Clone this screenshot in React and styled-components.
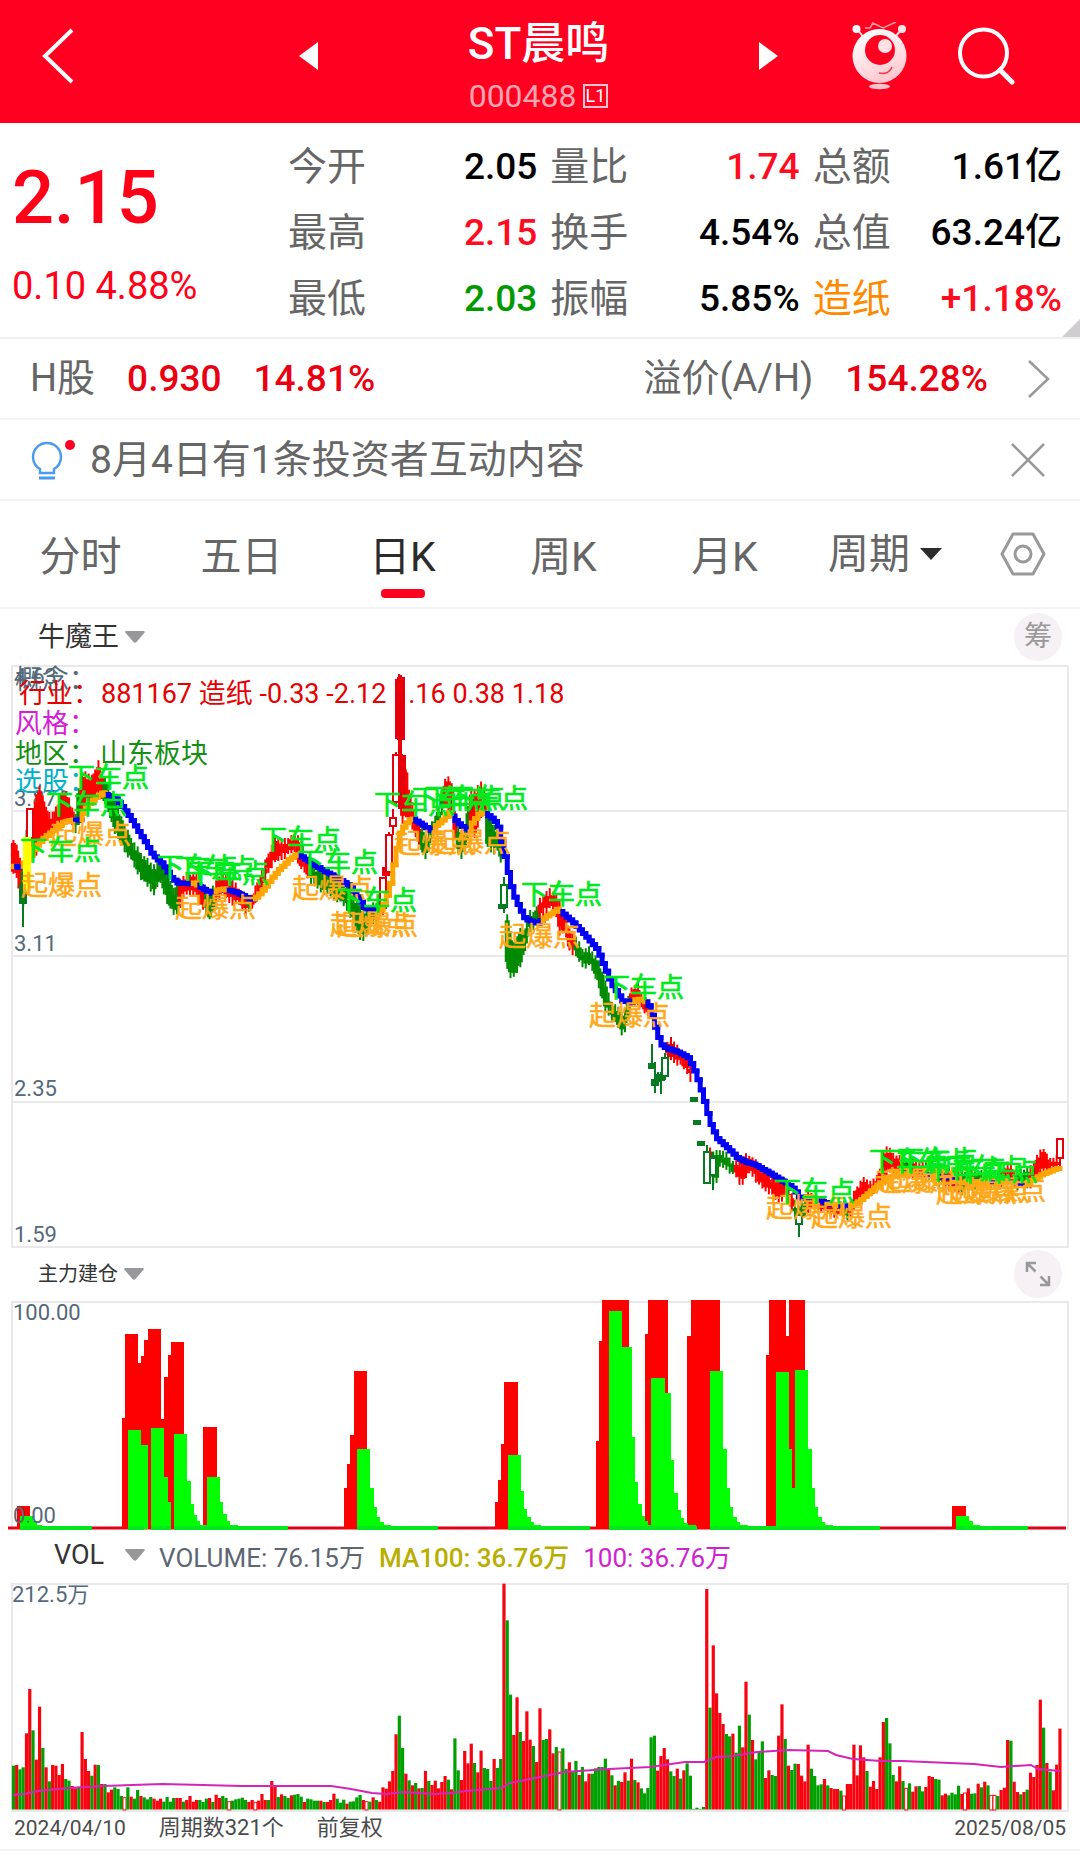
import React from "react";
import styled, { createGlobalStyle } from "styled-components";

const FONT = 'Roboto, "Noto Sans CJK SC", sans-serif';

const GlobalStyle = createGlobalStyle`
  * { box-sizing: border-box; }
  body { margin: 0; background: #fff; font-family: ${FONT}; color: #222; }
  button, select { font: inherit; color: inherit; background: none; border: 0; padding: 0; margin: 0; cursor: pointer; }
  svg { display: block; flex: none; }
  svg text { font-family: ${FONT}; }
`;

const Page = styled.main`
  width: 100%;
  background: #fff;
`;

/* ---------- header ---------- */

const Header = styled.header`
  display: grid;
  grid-template-columns: 318px 1fr 321px;
  align-items: center;
  height: 123px;
  background: #ff0020;
  color: #fff;
`;

const HeaderStart = styled.div`
  display: flex;
  align-items: center;
  justify-content: space-between;
  padding: 0 0 12px 42px;
`;

const HeaderEnd = styled.div`
  display: flex;
  align-items: center;
  padding: 0 65px 12px 0;
  gap: 51px;
`;

const IconButton = styled.button`
  display: flex;
  align-items: center;
  justify-content: center;
`;

const NextButton = styled(IconButton)`
  margin-right: auto;
`;

const TitleBlock = styled.div`
  display: flex;
  flex-direction: column;
  align-items: center;
  padding-top: 8px;
`;

const Title = styled.h1`
  margin: 0;
  font-size: 44px;
  line-height: 60px;
  font-weight: 500;
`;

const CodeLine = styled.div`
  display: flex;
  align-items: center;
  gap: 6px;
  font-size: 32px;
  line-height: 44px;
  color: #ffa6b0;
`;

const Level = styled.span`
  border: 2px solid #ffc4cb;
  color: #fff;
  font-size: 18px;
  line-height: 20px;
  padding: 0 1px;
`;

/* ---------- quote ---------- */

const Quote = styled.section`
  position: relative;
  display: grid;
  grid-template-columns: 276px 1fr;
  padding: 11px 18px 5px 12px;
  border-bottom: 2px solid #efeff0;
`;

const PriceBlock = styled.div`
  display: flex;
  flex-direction: column;
  color: #ff0018;
`;

const Price = styled.strong`
  font-size: 74px;
  line-height: 128px;
  font-weight: 500;
`;

const Change = styled.span`
  font-size: 38px;
  line-height: 48px;
`;

const Stats = styled.dl`
  display: grid;
  grid-template-columns: repeat(3, 1fr);
  column-gap: 13px;
  margin: 0;
`;

const Stat = styled.div`
  display: flex;
  justify-content: space-between;
  line-height: 66px;

  dt { font-size: 39px; color: ${(p) => p.$label || "#666"}; }
  dd { margin: 0; font-size: 37px; font-weight: 500; color: ${(p) => p.$value || "#000"}; }
`;

const Fold = styled.svg`
  position: absolute;
  right: 0;
  bottom: 0;
`;

/* ---------- strips ---------- */

const Strip = styled.section`
  display: flex;
  align-items: center;
  height: 81px;
  padding: 0 30px;
  border-bottom: 2px solid #f3f3f4;
  font-size: 38px;
  line-height: 60px;
  color: #666;
`;

const Pair = styled.div`
  display: flex;
  align-items: baseline;
  gap: 32px;
  margin-left: ${(p) => (p.$end ? "auto" : "0")};
  margin-right: ${(p) => (p.$end ? "40px" : "0")};
`;

const Rise = styled.span`
  color: #ea0010;
  font-size: 37px;
  font-weight: 500;
`;

const NoticeText = styled.a`
  flex: 1;
  margin-left: 14px;
  font-size: 39px;
  color: #666;
  text-decoration: none;
`;

const CloseButton = styled(IconButton)`
  margin-right: 4px;
`;

/* ---------- period tabs ---------- */

const Tabs = styled.nav`
  display: grid;
  grid-template-columns: repeat(5, 161fr) 160fr 115fr;
  height: 108px;
  border-bottom: 2px solid #f3f3f4;
`;

const Tab = styled.button`
  display: flex;
  flex-direction: column;
  align-items: center;
  justify-content: flex-end;
  padding-bottom: 9px;
  font-size: 41px;
  line-height: 64px;
  color: ${(p) => (p.$active ? "#2b2b2b" : "#666")};

  &::after {
    content: "";
    width: 44px;
    height: 9px;
    border-radius: 4px;
    background: ${(p) => (p.$active ? "#ff0020" : "transparent")};
  }
`;

const TabCell = styled.div`
  display: flex;
  align-items: center;
  justify-content: center;
`;

const Picker = styled.label`
  display: flex;
  align-items: center;
  gap: ${(p) => p.$gap || 6}px;
  color: ${(p) => p.$color || "#333"};
  font-size: ${(p) => p.$size}px;

  select { appearance: none; outline: none; }
`;

/* ---------- chart panes ---------- */

const PaneBar = styled.div`
  display: flex;
  align-items: center;
  justify-content: space-between;
  height: ${(p) => p.$height}px;
  padding: 0 18px 0 38px;
`;

const RoundButton = styled.button`
  display: flex;
  align-items: center;
  justify-content: center;
  width: 48px;
  height: 48px;
  border-radius: 50%;
  background: #f5f1f4;
  color: #999;
  font-size: 28px;
  line-height: 40px;
`;

const VolumeBar = styled.div`
  display: flex;
  align-items: center;
  gap: 14px;
  height: 50px;
  padding: 0 0 4px 54px;
  font-size: 26px;
`;

const Reading = styled.span`
  color: ${(p) => p.$color};
  font-weight: ${(p) => p.$weight || 400};
`;

const ChartSvg = styled.svg`
  width: 100%;
  height: auto;
`;

const Footer = styled.footer`
  display: flex;
  align-items: center;
  gap: 33px;
  height: 38px;
  padding: 0 14px 6px;
  border-bottom: 2px solid #f3f3f4;
  font-size: 22px;
  line-height: 30px;
  color: #4b4b4b;

  time { font-size: 21px; }
  time:last-child { margin-left: auto; }
`;

const Caret = ({ width = 20, color = "#98989a" }) => (
  <svg width={width} height={width * 0.6} viewBox="0 0 20 12" aria-hidden="true">
    <path d="M1 0H19Q20.500 .8 19.300 2L11.500 11Q10 12.500 8.500 11L.7 2Q-.5 .8 1 0Z" fill={color} />
  </svg>
);

/* ---------- chart data ---------- */

const START = 13.4;
const PITCH = 3.2705;
const barX = (i) => START + i * PITCH;
const RED = "#ff0000";
const GREEN = "#008a00";

// [x, high, low, colour]
const RANGE = [
  [12, 840, 870, "r"], [15, 840, 878, "r"], [18, 850, 876, "r"], [20, 860, 895, "g"], [23, 870, 906, "g"],
  [27, 825, 870, "r"], [34, 812, 855, "r"], [37, 790, 852, "r"], [40, 787, 846, "r"], [43, 796, 840, "r"],
  [48, 815, 834, "r"], [55, 810, 830, "r"], [62, 791, 825, "r"], [66, 792, 824, "r"], [70, 802, 822, "r"],
  [74, 812, 824, "g"], [77, 818, 836, "g"], [80, 772, 818, "r"], [85, 772, 812, "r"], [90, 777, 806, "r"],
  [95, 771, 800, "r"], [98, 761, 795, "r"], [102, 772, 796, "r"], [104, 776, 802, "g"], [110, 790, 815, "g"],
  [116, 802, 835, "g"], [125, 826, 851, "g"], [130, 836, 857, "g"], [136, 846, 870, "g"], [143, 856, 880, "g"],
  [150, 862, 889, "g"], [155, 866, 893, "g"], [160, 862, 880, "g"], [165, 865, 896, "g"], [170, 880, 908, "g"],
  [175, 892, 916, "g"], [178, 880, 910, "r"], [185, 876, 894, "r"], [195, 873, 892, "r"], [200, 880, 904, "r"],
  [205, 888, 910, "g"], [210, 890, 920, "g"], [215, 884, 905, "r"], [222, 872, 892, "r"], [230, 877, 902, "r"],
  [240, 890, 904, "r"], [247, 896, 914, "g"], [252, 896, 908, "r"], [260, 876, 892, "r"], [265, 862, 880, "r"],
  [270, 850, 867, "r"], [275, 838, 862, "r"], [285, 840, 856, "r"], [295, 834, 850, "r"], [300, 836, 868, "r"],
  [305, 860, 872, "r"], [310, 861, 880, "g"], [320, 870, 890, "g"], [330, 872, 895, "g"], [340, 880, 901, "g"],
  [348, 886, 910, "g"], [355, 900, 925, "g"], [360, 906, 938, "g"], [366, 910, 938, "g"], [372, 905, 922, "g"],
  [378, 902, 922, "r"],
  [404, 755, 815, "r"], [408, 786, 820, "r"], [415, 815, 832, "r"], [420, 825, 848, "g"], [426, 836, 858, "g"],
  [430, 828, 845, "g"], [436, 814, 828, "g"], [440, 806, 822, "g"], [443, 782, 806, "r"], [447, 776, 810, "r"],
  [451, 780, 812, "r"], [455, 812, 836, "g"], [460, 836, 862, "g"], [465, 830, 848, "g"], [470, 792, 828, "r"],
  [475, 790, 838, "r"], [480, 783, 816, "r"], [484, 785, 812, "r"], [487, 812, 845, "g"], [492, 822, 852, "g"],
  [500, 832, 850, "g"],
  [507, 914, 965, "g"], [511, 936, 980, "g"], [515, 945, 974, "g"], [519, 930, 968, "g"], [524, 930, 954, "g"],
  [530, 912, 930, "g"], [535, 912, 926, "g"], [539, 901, 918, "r"], [545, 893, 912, "r"], [550, 890, 908, "r"],
  [555, 893, 908, "r"], [560, 902, 935, "r"], [565, 915, 932, "r"], [569, 930, 948, "r"], [575, 936, 955, "g"],
  [583, 950, 966, "g"], [590, 948, 965, "g"], [598, 960, 982, "g"], [605, 980, 1010, "g"], [610, 1000, 1015, "g"],
  [618, 1008, 1026, "g"], [622, 1014, 1034, "g"], [627, 1005, 1026, "g"], [630, 988, 1006, "r"], [638, 985, 1002, "r"],
  [645, 1000, 1013, "r"], [649, 1004, 1014, "r"],
  [668, 1045, 1056, "r"], [672, 1040, 1060, "r"], [680, 1050, 1064, "r"], [688, 1056, 1073, "r"], [692, 1066, 1083, "r"],
  [711, 1152, 1176, "g"], [715, 1153, 1186, "g"], [720, 1150, 1166, "g"], [727, 1154, 1168, "g"], [733, 1162, 1174, "g"],
  [736, 1160, 1176, "r"], [740, 1160, 1184, "r"], [745, 1155, 1180, "r"], [750, 1156, 1171, "r"], [760, 1165, 1186, "r"],
  [770, 1176, 1192, "r"], [778, 1175, 1202, "r"], [785, 1180, 1196, "r"], [790, 1190, 1206, "r"], [795, 1202, 1216, "g"],
  [799, 1206, 1226, "g"], [803, 1200, 1217, "g"], [808, 1190, 1210, "r"], [815, 1198, 1207, "r"], [825, 1200, 1211, "r"],
  [835, 1205, 1215, "r"], [842, 1202, 1214, "g"], [850, 1203, 1219, "r"], [855, 1190, 1206, "r"], [860, 1182, 1200, "r"],
  [865, 1178, 1196, "r"], [872, 1183, 1192, "r"], [880, 1170, 1186, "r"], [885, 1146, 1175, "r"], [889, 1147, 1172, "r"],
  [893, 1155, 1174, "r"], [900, 1156, 1175, "g"], [910, 1160, 1176, "r"], [925, 1162, 1178, "g"], [940, 1166, 1184, "r"],
  [960, 1172, 1194, "g"], [980, 1172, 1186, "g"], [1000, 1174, 1188, "r"], [1008, 1162, 1176, "r"], [1015, 1172, 1188, "g"],
  [1030, 1168, 1186, "r"], [1037, 1156, 1178, "r"], [1043, 1148, 1170, "r"], [1050, 1160, 1173, "r"], [1056, 1156, 1166, "r"],
];

// stretches of the time axis that are drawn one candle at a time below
const SINGLES_AT = [[380, 402], [501, 506], [650, 667], [693, 709], [1058, 1070]];

// [x, high, body top, body bottom, low, colour, hollow]
const SINGLES = [
  [23, 872, 885, 903, 927, "g", 0], [30, 808, 809, 838, 845, "r", 1],
  [383, 877, 878, 908, 915, "r", 1], [386, 864, 868, 875, 882, "r", 0], [389, 832, 835, 872, 876, "r", 1],
  [393, 809, 818, 826, 835, "r", 1], [396, 752, 755, 802, 804, "r", 1], [399, 674, 680, 738, 755, "r", 0],
  [401, 675, 678, 739, 755, "r", 0], [402, 754, 756, 808, 812, "r", 0],
  [504, 877, 885, 907, 913, "g", 1], [502, 904, 905, 908, 908, "g", 0],
  [652, 1044, 1064, 1068, 1068, "g", 0], [655, 1062, 1080, 1085, 1093, "g", 0], [658, 1072, 1075, 1081, 1084, "g", 0],
  [661, 1072, 1075, 1080, 1094, "g", 0], [665, 1053, 1058, 1076, 1080, "g", 1],
  [694, 1098, 1098, 1101, 1101, "g", 0], [697, 1121, 1121, 1124, 1124, "g", 0], [701, 1142, 1142, 1145, 1145, "g", 0],
  [707, 1145, 1152, 1183, 1183, "g", 1], [713, 1152, 1158, 1175, 1190, "g", 1],
  [671, 1037, 1045, 1056, 1060, "r", 0], [799, 1206, 1215, 1224, 1237, "g", 1],
  [1060, 1138, 1139, 1158, 1166, "r", 1],
];

// [x, y, colour] of the trend line
const TREND = [
  [12, 867, "o"], [16, 866, "b"], [22, 868, "o"], [32, 857, "o"], [37, 848, "o"], [43, 841, "o"], [50, 835, "o"],
  [58, 829, "o"], [66, 822, "o"], [74, 820, "b"], [82, 820, "o"], [86, 812, "o"], [92, 803, "o"], [100, 796, "o"],
  [105, 793, "b"], [112, 796, "b"], [118, 799, "b"], [125, 807, "b"], [133, 818, "b"], [140, 830, "b"], [147, 841, "b"],
  [155, 855, "b"], [163, 862, "b"], [168, 868, "b"], [173, 877, "b"], [180, 883, "b"], [192, 884, "o"], [197, 883, "b"],
  [207, 890, "b"], [213, 893, "o"], [219, 890, "o"], [226, 889, "b"], [240, 893, "b"], [254, 900, "o"], [260, 896, "o"],
  [267, 888, "o"], [275, 877, "o"], [283, 868, "o"], [292, 859, "o"], [300, 854, "b"], [315, 864, "b"], [330, 873, "b"],
  [343, 880, "b"], [352, 886, "b"], [360, 897, "b"], [367, 908, "b"], [377, 911, "o"], [382, 911, "o"], [387, 903, "o"],
  [392, 888, "o"], [395, 870, "o"], [399, 850, "o"], [402, 834, "o"], [407, 825, "o"], [414, 818, "b"], [425, 825, "b"],
  [433, 831, "o"], [438, 826, "o"], [445, 820, "o"], [452, 812, "b"], [460, 823, "b"], [471, 831, "o"], [475, 822, "o"],
  [482, 813, "o"], [486, 812, "b"], [494, 818, "b"], [500, 824, "b"], [504, 842, "b"], [508, 860, "b"], [512, 880, "b"],
  [516, 895, "b"], [522, 908, "b"], [527, 918, "b"], [532, 921, "b"], [540, 923, "o"], [548, 917, "o"], [560, 909, "b"],
  [575, 922, "b"], [588, 936, "b"], [600, 950, "b"], [606, 965, "b"], [614, 984, "b"], [625, 1001, "b"], [632, 1002, "o"],
  [640, 999, "o"], [645, 1000, "b"], [650, 1003, "b"], [653, 1010, "b"], [657, 1025, "b"], [663, 1044, "b"],
  [668, 1048, "b"], [680, 1052, "b"], [690, 1057, "b"], [695, 1066, "b"], [700, 1079, "b"], [705, 1095, "b"],
  [709, 1110, "b"], [714, 1127, "b"], [720, 1139, "b"], [730, 1148, "b"], [740, 1158, "b"], [748, 1162, "b"],
  [758, 1165, "b"], [770, 1172, "b"], [780, 1178, "b"], [790, 1184, "b"], [797, 1190, "b"], [802, 1198, "b"],
  [812, 1199, "o"], [818, 1200, "b"], [832, 1204, "o"], [838, 1205, "b"], [850, 1207, "o"], [862, 1201, "o"],
  [870, 1194, "o"], [880, 1185, "o"], [890, 1178, "o"], [900, 1174, "o"], [915, 1174, "b"], [930, 1175, "o"],
  [940, 1176, "b"], [952, 1178, "b"], [960, 1183, "o"], [985, 1182, "b"], [995, 1183, "o"], [1010, 1182, "b"],
  [1026, 1184, "o"], [1035, 1180, "o"], [1045, 1174, "o"], [1055, 1170, "o"], [1062, 1168, "o"],
];

const EXIT_MARKS = [
  [68, 777], [46, 804], [20, 850], [157, 867], [188, 873], [175, 868], [260, 839], [297, 862], [336, 900], [374, 804],
  [412, 799], [424, 798], [447, 798], [521, 894], [603, 987], [774, 1191], [869, 1161], [889, 1161], [897, 1160],
  [925, 1169], [944, 1168], [957, 1171],
];
const ENTRY_MARKS = [
  [51, 834], [22, 885], [176, 907], [293, 888], [331, 924], [338, 925], [395, 843], [431, 842], [500, 936], [590, 1015],
  [767, 1207], [812, 1216], [876, 1181], [886, 1180], [937, 1192], [950, 1191], [966, 1190],
];

const at = (rows, x) => {
  let k = 0;
  while (k < rows.length - 2 && rows[k + 1][0] <= x) k += 1;
  return [rows[k], rows[k + 1]];
};
const mix = (a, b, x, n) => a[n] + ((b[n] - a[n]) * Math.min(1, Math.max(0, (x - a[0]) / (b[0] - a[0]))));

const CANDLES = Array.from({ length: 321 }, (_, i) => {
  const x = barX(i);
  if (SINGLES_AT.some(([a, b]) => x > a && x < b)) return null;
  const [a, b] = at(RANGE, x);
  const high = mix(a, b, x, 1);
  const low = mix(a, b, x, 2);
  const inset = 3 + ((i * 7) % 5);
  return { x, high: high - (i % 3), low: low + ((i * 5) % 4), top: high + inset, bottom: low - inset + 1, color: a[3] === "r" ? RED : GREEN };
}).filter(Boolean);

const TREND_STEPS = Array.from({ length: 320 }, (_, i) => {
  const x = barX(i);
  const [a, b] = at(TREND, x);
  const [c, d] = at(TREND, barX(i + 1));
  return { x, from: mix(a, b, x, 1), to: mix(c, d, barX(i + 1), 1), color: a[2] === "b" ? "#0000f5" : "#ffa500" };
});

// [x1, x2, top]
const BUILD_RED = [
  [17, 30, 1506], [122, 126, 1418], [125, 138, 1334], [138, 142, 1363], [141, 145, 1356], [144, 149, 1340],
  [148, 161, 1329], [161, 164, 1419], [164, 168, 1377], [168, 171, 1355], [171, 184, 1342], [203, 217, 1427],
  [344, 347, 1488], [347, 350, 1464], [350, 354, 1435], [354, 367, 1371], [495, 498, 1502], [498, 501, 1480],
  [501, 504, 1444], [504, 518, 1382], [596, 599, 1441], [599, 602, 1341], [602, 629, 1300], [645, 649, 1334],
  [648, 668, 1300], [687, 691, 1336], [691, 720, 1300], [766, 770, 1355], [769, 786, 1300], [786, 789, 1336],
  [789, 805, 1300], [952, 966, 1506],
];
const BUILD_GREEN = [
  [20, 33, 1516], [33, 37, 1521], [37, 42, 1525], [128, 141, 1430], [141, 148, 1445], [151, 164, 1428], [164, 168, 1477],
  [168, 171, 1502], [174, 187, 1434], [187, 191, 1481], [191, 194, 1504], [194, 197, 1515], [197, 200, 1521],
  [200, 207, 1525], [207, 220, 1477], [220, 223, 1502], [223, 227, 1514], [227, 230, 1521], [230, 238, 1525],
  [357, 370, 1449], [370, 374, 1488], [374, 377, 1507], [377, 380, 1517], [380, 384, 1522], [384, 391, 1525],
  [508, 521, 1455], [521, 524, 1491], [524, 527, 1509], [527, 531, 1517], [531, 534, 1522], [534, 541, 1525],
  [609, 622, 1311], [622, 632, 1347], [632, 635, 1437], [635, 638, 1482], [638, 642, 1504], [642, 645, 1516],
  [645, 648, 1521], [648, 652, 1525], [651, 665, 1378], [665, 671, 1393], [671, 674, 1460], [674, 678, 1493],
  [678, 681, 1510], [681, 684, 1518], [684, 688, 1523], [688, 696, 1525], [710, 723, 1371], [723, 727, 1449],
  [727, 730, 1488], [730, 733, 1507], [733, 737, 1517], [737, 740, 1522], [740, 748, 1525], [776, 789, 1372],
  [789, 792, 1449], [792, 795, 1488], [795, 808, 1370], [808, 812, 1449], [812, 815, 1488], [815, 818, 1507],
  [818, 822, 1517], [822, 825, 1522], [825, 833, 1525], [956, 969, 1516], [969, 973, 1521], [973, 980, 1525],
];
const BUILD_BASE = [
  [20, 92], [128, 144], [151, 171], [174, 288], [357, 438], [508, 590], [609, 697], [710, 880], [956, 1028],
];

const VOLUMES = (
  "g587 r585 g598 g592 r490 r357 g481 r569 r410 g534 r592 g634 r585 r587 r615 r582 g627 g632 r648 r655 " +
  "g650 r486 r567 r603 g617 r584 g585 r642 g642 r667 r659 g652 g657 g678 h680 g652 r680 g686 g660 r678 " +
  "g682 g688 g681 r686 r692 r686 g695 g681 g695 g684 r684 r684 g695 r690 r678 r695 r690 g690 g696 g686 " +
  "r684 g696 r674 r684 g678 g684 h692 g692 g688 g686 g683 g690 r696 r690 h694 r692 r672 r690 g690 r633 " +
  "r650 g681 r673 g678 g684 r676 g674 g672 g680 r696 g686 g688 g692 g692 r692 g696 r696 r690 r671 g686 " +
  "g698 g689 r701 g695 g694 g682 g675 r690 h692 g695 r682 g690 r695 r652 r656 r634 r603 r493 g437 g534 " +
  "r611 g631 r646 g639 r655 g654 r603 g633 r645 r632 r655 r636 r618 g629 r658 g505 g601 r630 r543 r580 " +
  "r521 g579 r607 r542 g594 g597 g633 r567 g594 g567 r41 g151 g374 r495 r382 g486 r513 r424 r509 g528 " +
  "r576 r415 g510 g507 r478 r550 g531 h543 g535 g597 r577 g605 g573 r615 g591 r634 r611 g611 g595 g591 " +
  "g591 g566 r597 g616 r646 g633 r636 r607 g632 r566 g630 r637 g655 g670 g654 g502 g497 r602 r558 r534 " +
  "r568 g604 g618 r596 g626 r601 g580 g617 g717 g713 g717 g711 r57 g413 r226 r370 r429 r462 g492 g499 " +
  "r491 g548 g467 r532 r335 g434 r510 g568 g546 g514 r624 r601 g615 g618 r497 r403 g507 r587 g600 g581 " +
  "r582 r617 r634 r524 g596 g618 g646 g643 r627 g646 r654 r657 r657 g662 h675 r642 r642 r524 r616 r526 " +
  "r562 g603 r650 r633 r657 r562 r456 g444 g520 g615 r634 r589 g633 h652 g640 r665 r649 g648 g664 r651 " +
  "r618 r621 g627 g629 r676 r671 g676 g668 g673 g647 r672 h666 r655 g671 g670 r641 g652 r635 g646 h673 " +
  "h673 g678 r660 r653 r510 g512 r635 r666 g673 r666 g659 r608 r621 r585 r389 g473 r579 g605 r661 r584 r476"
).split(" ").map((s) => ({ kind: s[0], top: Number(s.slice(1)) / 3 }));

const AVERAGE = [
  [13, 225], [24, 224], [38, 221], [69, 218], [103, 216], [162, 214], [203, 215], [241, 216], [331, 216], [351, 219],
  [372, 223], [386, 224], [403, 222], [434, 224], [451, 223], [465, 221], [501, 218], [510, 213], [540, 207], [564, 202],
  [609, 199], [650, 197], [685, 192], [704, 192], [716, 187], [733, 186], [757, 182], [788, 180], [828, 181], [836, 185],
  [853, 189], [881, 191], [902, 191], [974, 194], [1001, 197], [1031, 195], [1038, 199], [1060, 201],
];

/* ---------- charts ---------- */

const GRID = "#e9e9eb";

function PriceChart() {
  return (
    <ChartSvg viewBox="0 664 1080 585" role="img" aria-label="日K">
      <rect x="12" y="666" width="1056" height="581" fill="none" stroke={GRID} strokeWidth="2" />
      {[811, 956, 1102].map((y) => <path key={y} d={`M12 ${y}H1068`} stroke={GRID} strokeWidth="2" />)}
      <g fontSize="22" fill="#546979">
        <text x="14" y="684">4.63</text>
        <text x="14" y="806">3.87</text>
        <text x="14" y="951">3.11</text>
        <text x="14" y="1096">2.35</text>
        <text x="14" y="1242">1.59</text>
      </g>
      <g fontSize="27">
        <text x="15" y="689" fill="#546979">概念：</text>
        <text y="703" fill="#e60000"><tspan x="19">行业：</tspan><tspan x="101">881167 造纸 -0.33 -2.12 1.16 0.38 1.18</tspan></text>
        <text x="15" y="733" fill="#d420d4">风格：</text>
        <text y="763" fill="#149014"><tspan x="15">地区：</tspan><tspan x="100">山东板块</tspan></text>
        <text x="15" y="791" fill="#00b1cc">选股：</text>
      </g>
      <g>
        {CANDLES.map((c) => (
          <g key={c.x}>
            <path d={`M${c.x} ${c.high}V${c.low}`} stroke={c.color} strokeWidth="2" />
            <path d={`M${c.x} ${c.top}V${Math.max(c.bottom, c.top + 3)}`} stroke={c.color} strokeWidth="5" />
          </g>
        ))}
        {SINGLES.map(([x, high, top, bottom, low, tone, hollow], i) => {
          const color = tone === "r" ? "#e6000c" : "#087a22";
          return (
            <g key={i} stroke={color} strokeWidth="2">
              <path d={`M${x} ${high}V${low}`} />
              <rect x={x - 3} y={top} width="6" height={Math.max(1, bottom - top)} fill={hollow ? "#fff" : color} />
            </g>
          );
        })}
      </g>
      <g fill="none" strokeWidth="5">
        {TREND_STEPS.map((s) => (
          <path key={s.x} d={`M${s.x} ${s.from}V${s.to}H${s.x + PITCH}`} stroke={s.color} strokeLinecap="square" />
        ))}
      </g>
      <rect x="23" y="837" width="8" height="54" fill="#ff0" />
      <g fontSize="27" fill="#ffa818" stroke="#ffa818" strokeWidth=".5">
        {ENTRY_MARKS.map(([x, y]) => <text key={`${x}-${y}`} x={x - 1} y={y + 10}>起爆点</text>)}
      </g>
      <g fontSize="27" fill="#00ea1e" stroke="#00ea1e" strokeWidth=".7">
        {EXIT_MARKS.map(([x, y]) => <text key={`${x}-${y}`} x={x} y={y + 10}>下车点</text>)}
      </g>
    </ChartSvg>
  );
}

const Steps = ({ rows, fill, base }) => (
  <g fill={fill} shapeRendering="crispEdges">
    {rows.map(([a, b, top]) => <rect key={`${a}-${top}`} x={a} y={top} width={b - a} height={base - top} />)}
  </g>
);

function BuildChart() {
  return (
    <ChartSvg viewBox="0 1299 1080 233" role="img" aria-label="主力建仓">
      <path d="M12 1530V1302H1068V1530" fill="none" stroke={GRID} strokeWidth="2" />
      <path d="M8 1528H1066" stroke="#e60018" strokeWidth="3" />
      <Steps rows={BUILD_RED} fill={RED} base={1529} />
      <Steps rows={BUILD_GREEN} fill="#00ff00" base={1529} />
      {BUILD_BASE.map(([a, b]) => <path key={a} d={`M${a} 1528H${b}`} stroke="#00e81c" strokeWidth="4" />)}
      <g fontSize="22" fill="#546979">
        <text x="13" y="1320">100.00</text>
        <text x="13" y="1523">0.00</text>
      </g>
    </ChartSvg>
  );
}

function VolumeChart() {
  return (
    <ChartSvg viewBox="0 12 1080 231" role="img" aria-label="VOL">
      <rect x="12" y="14" width="1056" height="227" fill="none" stroke={GRID} strokeWidth="2" />
      {VOLUMES.map(({ kind, top }, i) => (
        kind === "h"
          ? <rect key={i} x={barX(i) - 1.6} y={top + 1} width="3" height={239 - top} fill="#fff" stroke="#f01818" strokeWidth="1" />
          : <rect key={i} x={barX(i) - 1.6} y={top} width={3.2} height={239.500 - top} fill={kind === "r" ? "#f80410" : "#00a000"} />
      ))}
      <polyline points={AVERAGE.map((p) => p.join(",")).join(" ")} fill="none" stroke="#d326b8" strokeWidth="2" />
      <text x="12" y="32" fontSize="22" fill="#546979">212.5万</text>
    </ChartSvg>
  );
}

/* ---------- page ---------- */

const STATS = [
  { label: "今开", value: "2.05" },
  { label: "量比", value: "1.74", color: "#ff0c20" },
  { label: "总额", value: "1.61亿" },
  { label: "最高", value: "2.15", color: "#ff0c20" },
  { label: "换手", value: "4.54%" },
  { label: "总值", value: "63.24亿" },
  { label: "最低", value: "2.03", color: "#009a00" },
  { label: "振幅", value: "5.85%" },
  { label: "造纸", value: "+1.18%", color: "#ff0c20", labelColor: "#ff8a00" },
];

const PERIODS = ["分时", "五日", "日K", "周K", "月K"];

export default function App() {
  return (
    <Page>
      <GlobalStyle />
      <Header>
        <HeaderStart>
          <IconButton aria-label="返回">
            <svg width="32" height="56" viewBox="0 0 32 56" fill="none" stroke="#fff" strokeWidth="4">
              <path d="M30 2L3 28L30 54" />
            </svg>
          </IconButton>
          <IconButton aria-label="上一只">
            <svg width="19" height="28" viewBox="0 0 19 28" fill="#fff"><path d="M19 0V28L0 14Z" /></svg>
          </IconButton>
        </HeaderStart>
        <TitleBlock>
          <Title>ST晨鸣</Title>
          <CodeLine>000488<Level>L1</Level></CodeLine>
        </TitleBlock>
        <HeaderEnd>
          <NextButton aria-label="下一只">
            <svg width="19" height="28" viewBox="0 0 19 28" fill="#fff"><path d="M0 0V28L19 14Z" /></svg>
          </NextButton>
          <IconButton aria-label="助手">
            <svg width="55" height="68" viewBox="0 0 55 68">
              <defs>
                <linearGradient id="shell" x1="0.3" y1="0" x2="0.700" y2="1">
                  <stop offset="0" stopColor="#fff" />
                  <stop offset=".55" stopColor="#ffdfe3" />
                  <stop offset="1" stopColor="#ffc4cb" />
                </linearGradient>
              </defs>
              <path d="M5 7L13 17M50 7L43 15" stroke="#ffd7db" strokeWidth="2" />
              <circle cx="4.500" cy="7" r="4" fill="#fff" />
              <circle cx="50" cy="7" r="4" fill="#ffe6e9" />
              <path d="M13 6L18 6L21 1L31 6L44 0" fill="none" stroke="#ff9ba6" strokeWidth="1.500" />
              <circle cx="27.500" cy="34" r="27" fill="url(#shell)" />
              <circle cx="28" cy="28" r="15" fill="#ff0020" />
              <circle cx="33" cy="24" r="7" fill="#ffe2e5" />
              <path d="M27 51Q37 53 40 45" fill="none" stroke="#ff3049" strokeWidth="1.500" />
              <ellipse cx="27.500" cy="64.500" rx="10.500" ry="2.800" fill="#ffc4ca" />
            </svg>
          </IconButton>
          <IconButton aria-label="搜索">
            <svg width="57" height="58" viewBox="0 0 57 58" fill="none" stroke="#fff" strokeWidth="4">
              <circle cx="25.500" cy="26" r="23.500" />
              <path d="M42 43L54 55" strokeWidth="5" strokeLinecap="round" />
            </svg>
          </IconButton>
        </HeaderEnd>
      </Header>

      <Quote>
        <PriceBlock>
          <Price>2.15</Price>
          <Change>0.10 4.88%</Change>
        </PriceBlock>
        <Stats>
          {STATS.map((s) => (
            <Stat key={s.label} $value={s.color} $label={s.labelColor}>
              <dt>{s.label}</dt>
              <dd>{s.value}</dd>
            </Stat>
          ))}
        </Stats>
        <Fold width="18" height="18" viewBox="0 0 18 18" aria-hidden="true"><path d="M18 0V18H0Z" fill="#cfcdd0" /></Fold>
      </Quote>

      <Strip>
        <Pair><span>H股</span><Rise>0.930</Rise><Rise>14.81%</Rise></Pair>
        <Pair $end><span>溢价(A/H)</span><Rise>154.28%</Rise></Pair>
        <IconButton aria-label="详情">
          <svg width="22" height="38" viewBox="0 0 22 38" fill="none" stroke="#999" strokeWidth="2.500"><path d="M1 1L20 19L1 37" /></svg>
        </IconButton>
      </Strip>

      <Strip>
        <svg width="46" height="40" viewBox="0 0 46 40" fill="none" stroke="#4a9af0" strokeWidth="2.400" aria-hidden="true">
          <path d="M10 33V29Q3 25 3 17A14 14 0 0 1 31 17Q31 25 24 29V33Z" />
          <path d="M9 38H25" strokeWidth="3" />
          <circle cx="40" cy="5" r="5" fill="#ff0020" stroke="none" />
        </svg>
        <NoticeText href="#notice">8月4日有1条投资者互动内容</NoticeText>
        <CloseButton aria-label="关闭">
          <svg width="36" height="34" viewBox="0 0 36 34" stroke="#999" strokeWidth="2.500"><path d="M2 1L34 33M34 1L2 33" /></svg>
        </CloseButton>
      </Strip>

      <Tabs>
        {PERIODS.map((p) => <Tab key={p} $active={p === "日K"}>{p}</Tab>)}
        <TabCell>
          <Picker $size={41} $gap={10} $color="#666">
            <select aria-label="周期"><option>周期</option></select>
            <svg width="22" height="12" viewBox="0 0 22 12" aria-hidden="true"><path d="M0 0H22L11 12Z" fill="#2b2b2b" /></svg>
          </Picker>
        </TabCell>
        <TabCell>
          <IconButton aria-label="设置">
            <svg width="46" height="44" viewBox="0 0 46 44" fill="none" stroke="#999" strokeWidth="3">
              <path d="M13 2H33L44 22L33 42H13L2 22Z" strokeLinejoin="round" />
              <circle cx="23" cy="22" r="8" />
            </svg>
          </IconButton>
        </TabCell>
      </Tabs>

      <PaneBar $height={55}>
        <Picker $size={27}>
          <select aria-label="主图指标"><option>牛魔王</option></select>
          <Caret />
        </Picker>
        <RoundButton>筹</RoundButton>
      </PaneBar>
      <PriceChart />

      <PaneBar $height={50}>
        <Picker $size={20}>
          <select aria-label="副图指标"><option>主力建仓</option></select>
          <Caret />
        </Picker>
        <RoundButton aria-label="全屏">
          <svg width="26" height="26" viewBox="0 0 26 26" fill="none" stroke="#999" strokeWidth="2.500">
            <path d="M2 11V2H11M2 2L10.500 10.500M24 15V24H15M24 24L15.500 15.500" />
          </svg>
        </RoundButton>
      </PaneBar>
      <BuildChart />

      <VolumeBar>
        <Picker $size={27} $gap={20}>
          <select aria-label="成交量指标"><option>VOL</option></select>
          <Caret />
        </Picker>
        <Reading $color="#5d6672">VOLUME: 76.15万</Reading>
        <Reading $color="#b8ae00" $weight={500}>MA100: 36.76万</Reading>
        <Reading $color="#cf22cf">100: 36.76万</Reading>
      </VolumeBar>
      <VolumeChart />

      <Footer>
        <time>2024/04/10</time>
        <span>周期数321个</span>
        <span>前复权</span>
        <time>2025/08/05</time>
      </Footer>
    </Page>
  );
}
